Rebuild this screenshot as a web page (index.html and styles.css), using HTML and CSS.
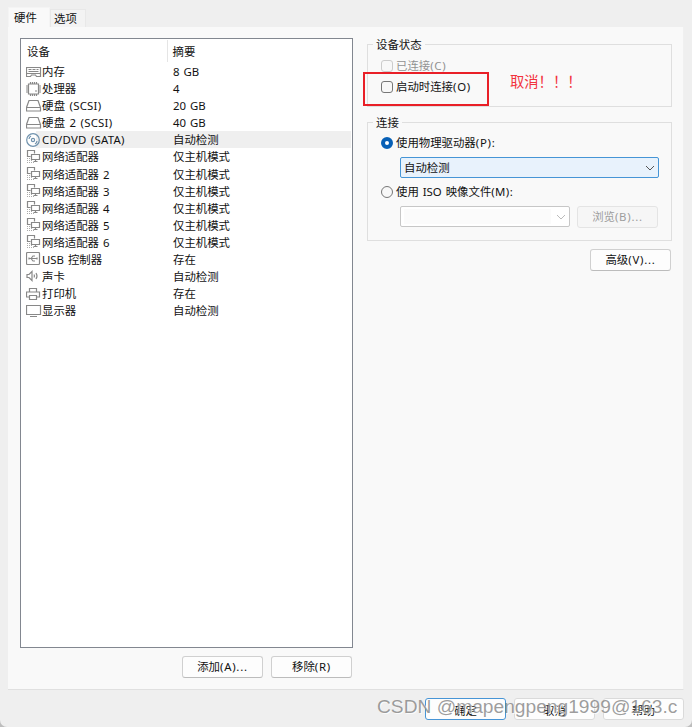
FILE: index.html
```html
<!DOCTYPE html>
<html lang="zh-CN">
<head>
<meta charset="utf-8">
<title>虚拟机设置</title>
<link rel="stylesheet" href="styles.css">
</head>
<body>
<svg class="defs" width="0" height="0">
  <symbol id="mem" viewBox="0 0 16 14"><path d="M.5 2.500h14v6h-14zM2.500 4.500h3M6.500 4.500h3M10.500 4.500h2M2.500 6.500h10M.5 8.500v3h4l1-1.500h4l1 1.500h4v-3"/></symbol>
  <symbol id="cpu" viewBox="0 0 16 14"><path d="M2.500 2h10v10h-10zM4.500 0v2M6.500 0v2M8.500 0v2M10.500 0v2M4.500 12v2M6.500 12v2M8.500 12v2M10.500 12v2M0 4h2M0 6h2M0 8h2M0 10h2M13 4h2M13 6h2M13 8h2M13 10h2M9 9h2"/></symbol>
  <symbol id="disk" viewBox="0 0 16 14"><path d="M3 1.500h9l2.500 7v3.500h-14v-3.500zM.5 8.500h14"/></symbol>
  <symbol id="cd" viewBox="0 0 16 14"><circle cx="7" cy="7" r="6.300"/><circle cx="7" cy="7" r="1.600"/><path d="M3 6a4 4 0 0 1 2-3M11 8a4 4 0 0 1-2 3"/></symbol>
  <symbol id="net" viewBox="0 0 16 14"><path d="M4.500 6.500H1.500v-6h7v3M5.500 4.500h8v5h-8zM9.500 9.500v2M7.500 11.500h4"/><path class="dots" d="M1 8.500h4M1 10.500h5M1 12.500h7"/></symbol>
  <symbol id="usb" viewBox="0 0 16 14"><rect x=".5" y=".5" width="13" height="12" rx="1"/><path d="M3 6.500h8M5 6.500l2-2.500h2M5 6.500l2 2.500h2M3 5.500v2M11 5.500v2"/></symbol>
  <symbol id="sound" viewBox="0 0 16 14"><path d="M1 5.500h2l3-3v9l-3-3H1zM8 5.500q1 1.500 0 3M10 4q2 3 0 6"/></symbol>
  <symbol id="print" viewBox="0 0 16 14"><path d="M3.500 5V1.500h7V5M3.500 10H.5V5h13v5h-3M3.500 8.500h7v4h-7z"/></symbol>
  <symbol id="monitor" viewBox="0 0 16 14"><path d="M.5 1.500h14v9H.5zM4 12.500h7"/></symbol>
</svg>

<div class="tabs">
  <div class="tab active">硬件</div>
  <div class="tab">选项</div>
</div>

<main class="panel">
  <section class="left">
    <div class="list">
      <div class="head"><span>设备</span><span class="sum">摘要</span></div>
      <div class="row"><svg><use href="#mem"/></svg><span>内存</span><span>8 GB</span></div>
      <div class="row"><svg><use href="#cpu"/></svg><span>处理器</span><span>4</span></div>
      <div class="row"><svg><use href="#disk"/></svg><span class="latin">硬盘 (SCSI)</span><span>20 GB</span></div>
      <div class="row"><svg><use href="#disk"/></svg><span class="latin">硬盘 2 (SCSI)</span><span>40 GB</span></div>
      <div class="row selected"><svg class="blue"><use href="#cd"/></svg><span class="latin">CD/DVD (SATA)</span><span>自动检测</span></div>
      <div class="row"><svg><use href="#net"/></svg><span>网络适配器</span><span>仅主机模式</span></div>
      <div class="row"><svg><use href="#net"/></svg><span>网络适配器 2</span><span>仅主机模式</span></div>
      <div class="row"><svg><use href="#net"/></svg><span>网络适配器 3</span><span>仅主机模式</span></div>
      <div class="row"><svg><use href="#net"/></svg><span>网络适配器 4</span><span>仅主机模式</span></div>
      <div class="row"><svg><use href="#net"/></svg><span>网络适配器 5</span><span>仅主机模式</span></div>
      <div class="row"><svg><use href="#net"/></svg><span>网络适配器 6</span><span>仅主机模式</span></div>
      <div class="row"><svg><use href="#usb"/></svg><span>USB 控制器</span><span>存在</span></div>
      <div class="row"><svg><use href="#sound"/></svg><span>声卡</span><span>自动检测</span></div>
      <div class="row"><svg><use href="#print"/></svg><span>打印机</span><span>存在</span></div>
      <div class="row"><svg><use href="#monitor"/></svg><span>显示器</span><span>自动检测</span></div>
    </div>
    <div class="actions">
      <button>添加<span class="key">(A)...</span></button>
      <button>移除<span class="key">(R)</span></button>
    </div>
  </section>

  <section class="right">
    <div class="group status">
      <div class="legend"><span>设备状态</span></div>
      <label class="option disabled"><i class="check"></i>已连接<span class="key">(C)</span></label>
      <label class="option second"><i class="check"></i>启动时连接<span class="key">(O)</span></label>
      <div class="mark"></div>
      <div class="note">取消！！！</div>
    </div>
    <div class="group connection">
      <div class="legend"><span>连接</span></div>
      <label class="option"><i class="radio on"></i>使用物理驱动器<span class="key">(P):</span></label>
      <div class="select focus"><span>自动检测</span><svg viewBox="0 0 10 6"><path d="M1 1l4 4 4-4"/></svg></div>
      <label class="option iso"><i class="radio"></i>使用 ISO 映像文件<span class="key small">(M):</span></label>
      <div class="file">
        <div class="select off"><span></span><svg viewBox="0 0 10 6"><path d="M1 1l4 4 4-4"/></svg></div>
        <button class="disabled">浏览<span class="key">(B)...</span></button>
      </div>
    </div>
    <button class="advanced">高级<span class="key">(V)...</span></button>
  </section>
</main>

<footer class="footer">
  <button class="primary">确定</button>
  <button>取消</button>
  <button>帮助</button>
</footer>
<div class="watermark">CSDN @mapengpeng1999@163.c</div>
</body>
</html>
```
FILE: styles.css
```css
* { box-sizing: border-box; }

html { background: #bdbdbd; }

body {
  margin: 0;
  height: 727px;
  overflow: hidden;
  position: relative;
  display: flex;
  flex-direction: column;
  border-radius: 0 0 7px 7px;
  background: #efefef;
  color: #111;
  font: 11.4px/17px "Noto Sans", "Noto Sans CJK SC", sans-serif;
  word-spacing: 1px;
  white-space: nowrap;
}

.defs { position: absolute; }

.tabs {
  display: flex;
  align-items: flex-end;
  height: 27px;
  padding-left: 8px;
  flex: none;
}
.tab {
  width: 36px;
  height: 18px;
  padding-left: 3px;
  background: #f3f3f3;
  border: 1px solid #e8e8e8;
  border-bottom: 0;
  line-height: 18px;
}
.tab.active {
  width: 42px;
  height: 20px;
  padding-left: 5px;
  background: #f9f9f9;
  border-color: #f4f4f4;
  line-height: 19px;
}

.panel {
  display: flex;
  flex: none;
  width: 676px;
  height: 663px;
  margin-left: 8px;
  padding: 11px 0 0 12px;
  background: #f9f9f9;
  border-right: 1px solid #f0f0f0;
  border-bottom: 1px solid #e0e0e0;
}

.left { width: 333px; }
.list {
  height: 610px;
  background: #fff;
  border: 1px solid #828790;
  padding-right: 1px;
}
.head {
  display: flex;
  height: 24px;
  padding: 4px 0 0 6px;
}
.head span { width: 140px; }
.head .sum {
  position: relative;
  width: 185px;
  padding-left: 6px;
}
.head .sum::before {
  content: "";
  position: absolute;
  left: 0;
  top: -3px;
  height: 22px;
  border-left: 1px solid #e5e5e5;
}
.row {
  display: grid;
  grid-template-columns: 16px 131px 1fr;
  height: 17.080px;
  padding-left: 5px;
  align-items: center;
}
.row.selected { background: linear-gradient(90deg, #fff 15px, #efefef 15px); }
.row svg {
  width: 16px;
  height: 14px;
  fill: none;
  stroke: #888;
  stroke-width: 1.200;
}
.row svg.blue { stroke: #7092ad; }
.dots { stroke: #aaa; stroke-dasharray: 1 1; }
.latin { letter-spacing: .25px; }
.key { letter-spacing: .75px; }
.key.small { letter-spacing: .4px; }

button {
  width: 81px;
  height: 22px;
  padding: 0;
  border: 1px solid #d0d0d0;
  border-bottom-color: #bcbcbc;
  border-radius: 3px;
  background: #fdfdfd;
  color: #111;
  font: inherit;
  line-height: 20px;
}
button.disabled {
  border-color: #e4e4e4;
  background: #f6f6f6;
  color: #9d9d9d;
}
.actions {
  display: flex;
  justify-content: flex-end;
  gap: 8px;
  padding: 8px 1px 0 0;
}

.right {
  width: 305px;
  margin-left: 14px;
  padding-top: 6px;
}
.group {
  position: relative;
  border: 1px solid #dfdfdf;
}
.status { height: 63px; }
.connection { height: 119px; margin-top: 15px; }
.legend {
  height: 17px;
  margin: -9px 0 0 5px;
}
.legend span { padding: 0 3px; background: #f9f9f9; display: inline-block; }
.option {
  display: flex;
  align-items: center;
  height: 17px;
  margin-left: 13px;
  white-space: pre;
}
.status .option { margin-top: 4px; }
.option.disabled { color: #929292; }
.check, .radio {
  width: 12px;
  height: 12px;
  margin-right: 3px;
  border: 1px solid #777;
  border-radius: 3px;
  background: #f8f8f8;
}
.disabled .check { border-color: #ccc; }
.radio { border-radius: 50%; }
.radio.on { border: 4px solid #0860b6; background: #fff; }

.mark {
  position: absolute;
  left: -5px;
  top: 27px;
  width: 126px;
  height: 34px;
  border: 2px solid #e91f27;
}
.note {
  position: absolute;
  left: 142px;
  top: 26px;
  color: #f2333d;
  font: 14.300px/20px "Noto Sans CJK SC", sans-serif;
}

.connection .option { margin-top: 3px; }
.select {
  display: flex;
  align-items: center;
  justify-content: space-between;
  height: 21px;
  border: 1px solid #c7c7c7;
  border-radius: 2px;
  padding: 0 3px;
  background: #fff;
}
.select svg {
  width: 10px;
  height: 6px;
  fill: none;
  stroke: #555;
  stroke-width: 1;
}
.select.focus {
  width: 259px;
  margin: 6px 0 0 32px;
  border-color: #4695d6;
  background: #e8f2fc;
}
.connection .option.iso { margin-top: 5px; }
.file { display: flex; gap: 7px; margin: 6px 0 0 32px; }
.select.off { width: 170px; }
.select.off span { width: 147px; height: 15px; background: #fbfbfb; }
.select.off svg { stroke: #bbb; }
.advanced { display: block; margin: 8px 0 0 223px; }

.footer {
  display: flex;
  gap: 8px;
  padding: 8px 0 0 425px;
}
.footer button { border-color: #dadada; flex: none; line-height: 22px; padding-top: 1px; }
.footer .primary { border-color: #4795d6; }

.watermark {
  position: absolute;
  left: 377px;
  top: 696px;
  color: rgba(125, 125, 125, .75);
  font: 19.200px/22px "Liberation Sans", sans-serif;
  word-spacing: 0;
  text-shadow: 1px 1px 0 rgba(255, 255, 255, .8);
}
```
